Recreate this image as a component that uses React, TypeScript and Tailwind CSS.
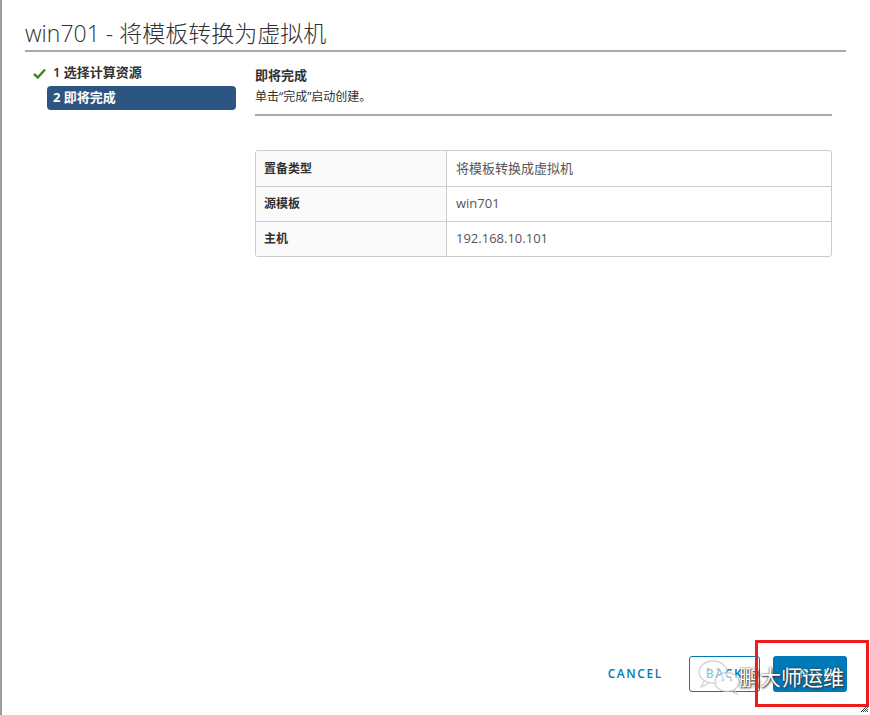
import React from 'react';

const ROWS = [
  { label: '置备类型', value: '将模板转换成虚拟机' },
  { label: '源模板', value: 'win701' },
  { label: '主机', value: '192.168.10.101' },
];

const FONT = "font-['Open_Sans','Noto_Sans_CJK_SC',sans-serif]";

const App: React.FC = () => {
  return (
    <div className={`relative flex h-[715px] w-[870px] flex-col overflow-hidden border-l-2 border-[#9c9c9c] bg-white ${FONT}`}>
      {/* Header */}
      <div className="ml-[23px] w-[821px] border-b-2 border-[#a9a9a9] pt-[17px] pb-[1px]">
        <h1 className="text-[23px] font-light leading-[32px] text-[#313131]">win701 - 将模板转换为虚拟机</h1>
      </div>

      {/* Body */}
      <div className="flex pt-[11px]">
        {/* Steps */}
        <div className="ml-[23px] w-[230px]">
          <div className="flex h-[20px] items-center pl-[8px]">
            <svg width="13" height="11" viewBox="0 0 13 11" className="mr-[7px]">
              <path d="M1 6 L4.8 9.5 L12 1.5" fill="none" stroke="#3c8a1e" strokeWidth="2.4" />
            </svg>
            <span className="text-[13px] font-semibold text-[#313131]">1 选择计算资源</span>
          </div>
          <div className="mt-[3px] ml-[22px] flex h-[24px] w-[189px] items-center rounded-[4px] bg-[#2c5681] pl-[6px]">
            <span className="text-[13px] font-bold text-white">2 即将完成</span>
          </div>
        </div>

        {/* Content */}
        <div className="w-[577px]">
          <div className="border-b-2 border-[#a9a9a9] pb-[6px]">
            <div className="pt-[1px] text-[13px] font-semibold leading-[22px] text-[#313131]">即将完成</div>
            <div className="text-[12px] leading-[22px] text-[#313131]">单击“完成”启动创建。</div>
          </div>

          <div className="mt-[34px] overflow-hidden rounded-[3px] border border-[#cccccc]">
            {ROWS.map((r, i) => (
              <div key={r.label} className={`flex h-[35px] ${i > 0 ? 'border-t border-[#cccccc]' : ''}`}>
                <div className="flex w-[191px] items-center border-r border-[#cccccc] bg-[#fafafa] pl-[8px] text-[12px] font-semibold text-[#313131]">
                  {r.label}
                </div>
                <div className="flex flex-1 items-center pl-[9px] text-[13px] text-[#565656]">{r.value}</div>
              </div>
            ))}
          </div>
        </div>
      </div>

      {/* Footer */}
      <div className="mt-auto mb-[23px] mr-[23px] flex items-center justify-end">
        <button className="mr-[26px] text-[12px] font-semibold tracking-[1.6px] text-[#0079b8]">CANCEL</button>
        <button className="mr-[13px] h-[36px] w-[71px] rounded-[3px] border border-[#0079b8] text-[12px] font-semibold tracking-[1.6px] text-[#0079b8]">
          BACK
        </button>
        <button className="h-[36px] w-[74px] rounded-[3px] bg-[#0079b8] text-[12px] font-semibold tracking-[1.6px] text-white">
          FINISH
        </button>
      </div>

      {/* Watermark overlay */}
      <div className="absolute left-[694px] top-[657px] flex items-center">
        <svg width="50" height="40" viewBox="0 0 50 40" className="opacity-80">
          <ellipse cx="17" cy="15" rx="14" ry="11" fill="white" fillOpacity="0.7" stroke="#c8c8c8" strokeWidth="1.3" />
          <path d="M8 24 L5 30 L13 26" fill="none" stroke="#c8c8c8" strokeWidth="1.3" />
          <circle cx="12" cy="12" r="1.6" fill="#c8c8c8" />
          <circle cx="22" cy="12" r="1.6" fill="#c8c8c8" />
          <ellipse cx="31" cy="25" rx="12" ry="9.5" fill="white" fillOpacity="0.7" stroke="#c8c8c8" strokeWidth="1.3" />
          <path d="M38 32 L41 37 L34 33.5" fill="none" stroke="#c8c8c8" strokeWidth="1.3" />
          <circle cx="27" cy="23" r="1.4" fill="#c8c8c8" />
          <circle cx="35" cy="23" r="1.4" fill="#c8c8c8" />
        </svg>
      </div>
      <div className="absolute left-[737px] top-[660px] text-[21px] leading-[32px] text-white [text-shadow:0_0_2px_#333,1px_1px_2px_#333] font-['Noto_Sans_CJK_SC',sans-serif]">
        鹏大师运维
      </div>

      {/* Red highlight box */}
      <div className="absolute left-[753px] top-[640px] h-[67px] w-[114px] border-[3px] border-[#ee1c1c]" />

      {/* Resize grip */}
      <svg className="absolute left-[858px] top-[704px]" width="9" height="9" viewBox="0 0 9 9">
        <path d="M1 8 L8 1 M3 8 L8 3 M5 8 L8 5 M7 8 L8 7" stroke="#444" strokeWidth="1" />
      </svg>
    </div>
  );
};

export default App;
